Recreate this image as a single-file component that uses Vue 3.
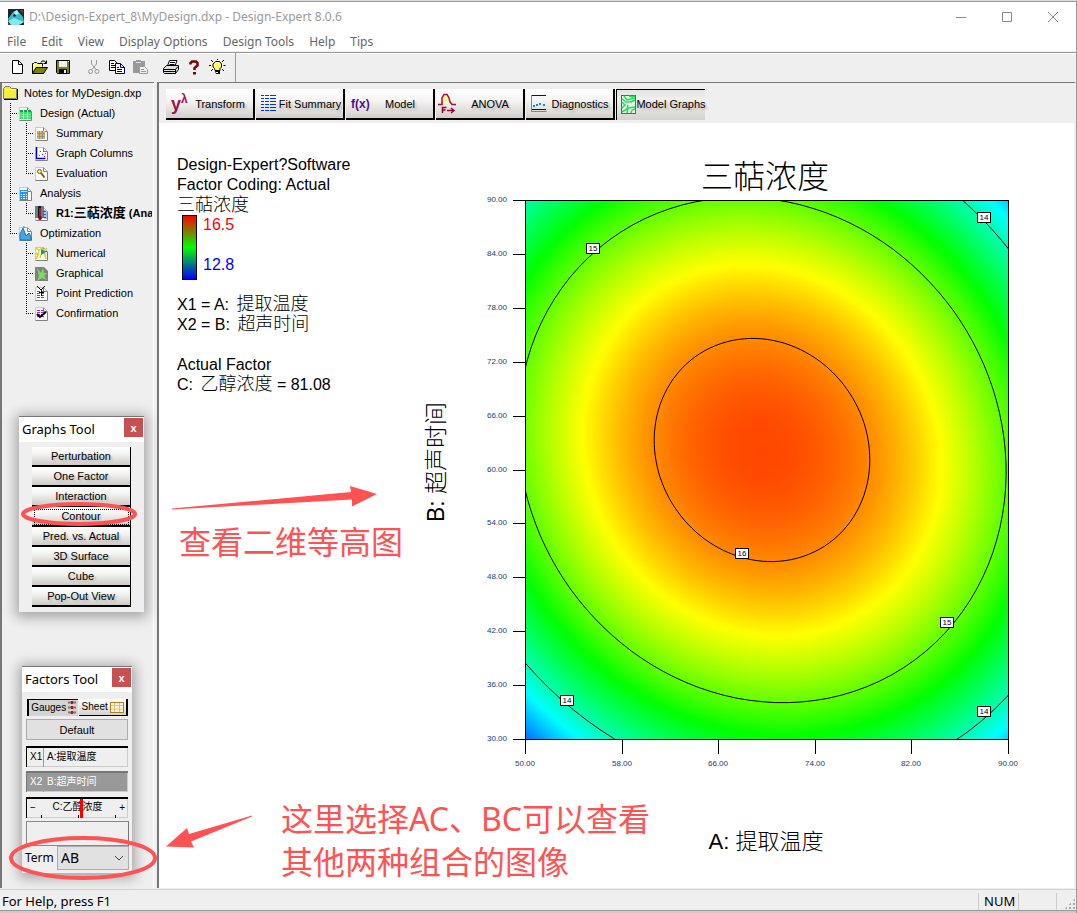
<script setup>
import { ref } from 'vue'

const menus = ['File', 'Edit', 'View', 'Display Options', 'Design Tools', 'Help', 'Tips']

const toolIcons = {
  'New': '<path d="M3.5 1.5h6l4 4v9h-10z" fill="#fff" stroke="#000"/><path d="M9.500 1.500v4h4" fill="none" stroke="#000"/>',
  'Open': '<path d="M.5 14.500v-10h1l1-1h2l1 1h5v3" fill="#ffff80" stroke="#000"/><path d="M.5 14.500l3.500-6h11.500l-4 6z" fill="#808000" stroke="#000"/><path d="M9 3.500l1-1.500h2.500l1.500 2M14.500 1.500v3h-3" fill="none" stroke="#000"/>',
  'Save': '<path d="M1.500 1.500h13v13h-12l-1-1z" fill="#808000" stroke="#000"/><path d="M4 2h8v6H4z" fill="#efefef"/><path d="M4 10h8v4H4z" fill="#000"/><path d="M9 11h2v3H9z" fill="#efefef"/><path d="M13 2h1v1h-1z" fill="#efefef"/>',
  'Cut': '<path d="M5.500 1v4l5 6M10.500 1v4l-5 6" fill="none" stroke="#999"/><circle cx="4.500" cy="12.500" r="2" fill="none" stroke="#999"/><circle cx="11" cy="12.500" r="2" fill="none" stroke="#999"/>',
  'Copy': '<path d="M.5 1.500h5l3 3v7h-8z" fill="#fff" stroke="#000"/><path d="M2 4.500h3M2 6.500h4M2 8.500h4" stroke="#000"/><path d="M6.500 4.500h5l4 4v6h-9z" fill="#fff" stroke="#000080"/><path d="M11.500 4.500v4h4M8 8.500h2M8 10.500h5M8 12.500h5" fill="none" stroke="#000080"/>',
  'Paste': '<path d="M1 2h3V1h5v1h4v5H7v7H1z" fill="#999"/><path d="M4 3.500h5" stroke="#ddd"/><path d="M7.500 7.500h5l3 3v4h-8z" fill="#efefef" stroke="#999"/><path d="M9 10.500h3M9 12.500h5" stroke="#999"/>',
  'Print': '<path d="M4.500 7l2-5.500h7.500l-2 5.500" fill="#fff" stroke="#000"/><path d="M7 3.500h5M6.500 5.500h5" stroke="#000"/><path d="M.5 9.500l3-3h12v4l-3 4h-11l-1-1z" fill="#ddd" stroke="#000"/><path d="M1 10.500h11.500l2.500-3M12.500 10.500v4M1 12.500h11" fill="none" stroke="#000"/><path d="M8 11h3v1H8z" fill="#ffff00"/>',
  'Help': '<path d="M4.500 5.500V4l1.500-1.500h4L11.500 4v2.500L8.500 9v2" fill="none" stroke="#800000" stroke-width="2.500"/><path d="M7 13h3v2.500H7z" fill="#800000"/>',
  'Tips': '<path d="M5.500 9.500L4 8V5l2.500-2.500h4L12.500 5v3L11 9.500v2H6z" fill="#ffff60" stroke="#000"/><path d="M6 12h5v3H7z" fill="#000"/><path d="M7 13.500h2" stroke="#fff"/><path d="M8.500 0v1M2 1l2 2M15 1l-2 2M0 6.500h2M14.500 6.500h2M2 12l2-2M15 12l-2-2" stroke="#000"/>',
}
const toolGroups = [['New', 'Open', 'Save'], ['Cut', 'Copy', 'Paste'], ['Print', 'Help', 'Tips']]

const sheet = '<path d="M1.500 2.500h7l4 4v9h-11z" fill="#fff"/><path d="M.5 15.500v-13h8" fill="none" stroke="#c8c8c8"/><path d="M8.500 2.500v4h4v9h-12" fill="none" stroke="#808080"/><path d="M8.500 2.500l4 4" stroke="#b0b0b0"/>'
const treeIcons = {
  folder: '<path d="M.5 13.500v-10l2-2h4l2 2h5v10z" fill="#f5ec3c" stroke="#808040"/><path d="M14.500 4v10.500H1" fill="none" stroke="#000"/><path d="M2 4.500h11" stroke="#fffbb0"/>',
  design: sheet + '<path d="M1 5h11v9H1z" fill="#30e860"/><path d="M1 5h11v2H1z" fill="#18a040"/><path d="M1 9.500h11M1 11.500h11" stroke="#a0ffb8" stroke-width=".6"/><path d="M4.500 5v9M8.500 5v9" stroke="#fff" stroke-width=".8"/>',
  summary: sheet + '<path d="M2 6h8v8H2z" fill="#e8b048"/><path d="M2 8.500h8M2 11.500h8M4.500 6v8M7.500 6v8" stroke="#8890b0"/>',
  columns: sheet + '<path d="M1.500 2v11.500h9" fill="none" stroke="#0000b0" stroke-width="1.500"/><path d="M5 6h1v1H5zM7 9h1v1H7z" fill="#f00"/><path d="M8 6h1v1H8zM4 10h1v1H4z" fill="#0a0"/><path d="M10 8h1v1h-1zM9 11h1v1H9z" fill="#c0c"/>',
  evaluation: sheet + '<circle cx="4.500" cy="6.500" r="2" fill="#ffe890" stroke="#806000"/><path d="M6 8l3.500 4.500" stroke="#806000" stroke-width="2"/>',
  analysis: sheet + '<path d="M1 5h8v10H1z" fill="#2196f3"/><path d="M2 6h6v1H2z" fill="#c8e8ff"/><path d="M2 9h1v1H2zM4 9h2v1H4zM7 9h1v1H7zM2 11h1v1H2zM4 11h2v1H4zM7 11h1v1H7zM2 13h1v1H2zM4 13h2v1H4zM7 13h1v1H7z" fill="#e8f6ff"/>',
  response: sheet + '<path d="M0 1h9v12H0z" fill="#707888"/><path d="M9 5h3v9H9z" fill="#b8c0e0"/><path d="M4.500 1v12" stroke="#181818" stroke-width="3"/><path d="M5 3v9" stroke="#e04060"/><circle cx="5" cy="13" r="2" fill="#a00020"/><path d="M8 6.500h3M8 9.500h3M8 12.500h3" stroke="#405090"/>',
  optimization: sheet + '<path d="M1 15V9l3-6 2 5 1 3 3-3 2 4v3z" fill="#40a8e8" stroke="#2070b0"/><path d="M4 1l3 1-3 2z" fill="#00d0e0"/>',
  numerical: sheet + '<path d="M0 3l4 2 3-2 2 3 3-3M1 14l2-4 1-5M7 7l-2 6M9 6l2 8M0 8l4 2" fill="none" stroke="#e0d020" stroke-width="1.500"/><path d="M6 4l5 3-5 3z" fill="#1090b0"/>',
  graphical: '<path d="M0 2h9l4 4v10H0z" fill="#808080"/><path d="M2 3l4 5 2-5 1 5 3 0-3 3 3 4-5-2-5 3 2-5z" fill="#78e058"/>',
  point: sheet + '<path d="M2 6.500h8M2 8.500h8M2 10.500h8M2 12.500h8" stroke="#b020d0" stroke-dasharray="3 1"/><path d="M2 1l4 4 4-4M6.500 5v6M4 7.500h5" fill="none" stroke="#000"/>',
  confirm: sheet + '<path d="M2 5.500h8M2 7.500h8M2 9.500h8M2 11.500h8" stroke="#b020d0" stroke-dasharray="3 1"/><path d="M2 9l3 3 6-5" fill="none" stroke="#000" stroke-width="2"/>',
}
/* guides: one entry per indent column; '' blank, 'line' passes through, 'tee' branches, 'end' closes the branch */
const tree = [
  { icon: 'folder', text: 'Notes for MyDesign.dxp', guides: [] },
  { icon: 'design', text: 'Design (Actual)', guides: ['tee'] },
  { icon: 'summary', text: 'Summary', guides: ['line', 'tee'] },
  { icon: 'columns', text: 'Graph Columns', guides: ['line', 'tee'] },
  { icon: 'evaluation', text: 'Evaluation', guides: ['line', 'end'] },
  { icon: 'analysis', text: 'Analysis', guides: ['tee'] },
  { icon: 'response', text: 'R1:', name: '三萜浓度', tail: ' (Ana', guides: ['line', 'end'] },
  { icon: 'optimization', text: 'Optimization', guides: ['end'] },
  { icon: 'numerical', text: 'Numerical', guides: ['', 'tee'] },
  { icon: 'graphical', text: 'Graphical', guides: ['', 'tee'] },
  { icon: 'point', text: 'Point Prediction', guides: ['', 'tee'] },
  { icon: 'confirm', text: 'Confirmation', guides: ['', 'end'] },
]

const tabs = [
  { text: 'Transform', glyph: 'y', sup: 'λ' },
  { text: 'Fit Summary', svg: '<path d="M4 2.500h15M4 5.500h15M4 8.500h15M4 11.500h15M4 14.500h15M4 17.500h15" stroke="#0030ff" stroke-dasharray="3 1 4 1 6 1"/>' },
  { text: 'Model', glyph: 'f(x)', fx: true },
  { text: 'ANOVA', svg: '<path d="M5 11V5l2-3.500h3L12 5v6z" fill="#ffffa0"/><path d="M1 11.500h4V5l2-3.500h3L12 5l1 4 2 2.500h4" fill="none" stroke="#b00840" stroke-width="1.500"/><path d="M5.500 20v-5.500h4M5.500 17h3M10 17.500h6M14 15l3 2.500-3 2.500" fill="none" stroke="#a00030" stroke-width="1.500"/>' },
  { text: 'Diagnostics', svg: '<path d="M5 2.500h14" stroke="#0000c0"/><path d="M4.500 2v16.500h15" fill="none" stroke="#20a8d8"/><path d="M5 16.500h14" stroke="#0000c0"/><path d="M6 12h2v2H6zM9 11h2v2H9zM12 10h2v2h-2zM16 11h2v2h-2z" fill="#0090e0"/>' },
  { text: 'Model Graphs', active: true, svg: '<rect x="4.500" y="1.500" width="14" height="18" fill="#e8fff0" stroke="#606060"/><path d="M5 5l4 3 5 0 4-2M7 2l3 4 8-2M5 8l3 3-3 3M5 18l5-3 1-4M10 19l1-5 7-1M14 19l1-3 3-1M12 2l3 1 3-1" fill="none" stroke="#20e050" stroke-width="1.500"/>' },
]

const graphTools = ['Perturbation', 'One Factor', 'Interaction', 'Contour', 'Pred. vs. Actual', '3D Surface', 'Cube', 'Pop-Out View']
const term = ref('AB')

/* Response surface: z = peak - (a·u² + b·u·v + c·v²), u and v measured from the optimum */
const surface = { peak: 16.2422, cx: 762, cy: 450, a: 2.1e-5, b: -3.5e-6, c: 1.96e-5 }
const plot = { x: 525, y: 200, w: 483, h: 539 }
const scale = { low: 12.8, high: 16.5 }

function colour(z) {
  const stops = [[0, 0, 255], [0, 255, 255], [0, 255, 0], [255, 255, 0], [255, 0, 0]]
  const p = Math.min(3.9999, Math.max(0, ((z - scale.low) / (scale.high - scale.low)) * 4))
  const i = Math.floor(p)
  const mix = stops[i].map((v, n) => Math.round(v + (stops[i + 1][n] - v) * (p - i)))
  return `rgb(${mix.join(',')})`
}
const depth = 3.4
const surfaceStops = Array.from({ length: 86 }, (_, i) => {
  const r = i / 85
  return { offset: r, color: colour(surface.peak - depth * r * r) }
})
const l11 = Math.sqrt(surface.a)
const l21 = surface.b / 2 / l11
const l22 = Math.sqrt(surface.c - l21 * l21)
const k = Math.sqrt(depth)
const surfaceMatrix = `matrix(${k / l11} 0 ${(-k * l21) / (l11 * l22)} ${k / l22} ${surface.cx} ${surface.cy})`

function contour(level) {
  const d = surface.peak - level
  const points = []
  for (let i = 0; i < 120; i++) {
    const t = (i / 120) * Math.PI * 2
    const x = Math.cos(t)
    const y = Math.sin(t)
    const r = Math.sqrt(d / (surface.a * x * x + surface.b * x * y + surface.c * y * y))
    points.push(`${(surface.cx + r * x).toFixed(1)} ${(surface.cy + r * y).toFixed(1)}`)
  }
  return `M${points.join('L')}Z`
}
const contours = [16, 15, 14].map(contour)
const flags = [
  { x: 593, y: 248, v: 15 }, { x: 984, y: 217, v: 14 }, { x: 742, y: 553, v: 16 },
  { x: 947, y: 622, v: 15 }, { x: 567, y: 700, v: 14 }, { x: 984, y: 711, v: 14 },
]
const yTicks = Array.from({ length: 11 }, (_, i) => ({ pos: plot.y + (plot.h * i) / 10, label: (90 - 6 * i).toFixed(2) }))
const xTicks = Array.from({ length: 6 }, (_, i) => ({ pos: plot.x + (plot.w * i) / 5, label: (50 + 8 * i).toFixed(2) }))
</script>

<template>
  <div class="app">
    <header class="titlebar">
      <svg class="logo" width="16" height="16" viewBox="0 0 16 16" aria-hidden="true">
        <rect width="16" height="16" fill="#182430" />
        <path d="M0 10l5-7 4-2 6 7 1 5-6 3H3z" fill="#38b8c8" />
        <path d="M0 12l6-3 10 4-5 3H3z" fill="#80e8f0" />
        <path d="M6 3l3-2 2 4-4 1z" fill="#a8f4f8" />
        <path d="M6 5l2 1-1 2-2-1z" fill="#102028" />
        <path d="M12 1h3v4z" fill="#803828" />
        <path d="M0 13l3 3H0z" fill="#604830" />
      </svg>
      <h1>D:\Design-Expert_8\MyDesign.dxp - Design-Expert 8.0.6</h1>
      <div class="winctl">
        <button aria-label="Minimize"><svg width="12" height="12" viewBox="0 0 12 12"><path d="M1 6.500h10" stroke="#888" /></svg></button>
        <button aria-label="Maximize"><svg width="12" height="12" viewBox="0 0 12 12"><path d="M1.500 1.500h9v9h-9z" fill="none" stroke="#888" /></svg></button>
        <button aria-label="Close"><svg width="12" height="12" viewBox="0 0 12 12"><path d="M1 1l10 10M11 1L1 11" stroke="#888" /></svg></button>
      </div>
    </header>
    <nav class="menubar"><button v-for="m in menus" :key="m">{{ m }}</button></nav>
    <div class="toolbar">
      <div class="tools">
        <div v-for="(g, i) in toolGroups" :key="i" class="group">
          <button v-for="t in g" :key="t" :aria-label="t">
            <svg width="17" height="17" viewBox="0 0 17 17" v-html="toolIcons[t]"></svg>
          </button>
        </div>
      </div>
    </div>

    <div class="body">
      <aside class="side">
        <ul class="tree">
          <li v-for="n in tree" :key="n.text" :class="{ bold: n.name }">
            <span v-for="(g, i) in n.guides" :key="i" class="guide" :class="g"></span>
            <svg width="16" height="17" viewBox="0 0 16 17" v-html="treeIcons[n.icon]"></svg>
            <span class="label">{{ n.text }}<span v-if="n.name" class="name">{{ n.name }}</span>{{ n.tail }}</span>
          </li>
        </ul>
      </aside>

      <main class="main">
        <div class="tabs">
          <button v-for="t in tabs" :key="t.text" :class="{ active: t.active }">
            <svg v-if="t.svg" width="20" height="21" viewBox="0 0 20 21" v-html="t.svg"></svg>
            <span v-else class="glyph" :class="{ fx: t.fx }">{{ t.glyph }}<sup v-if="t.sup">{{ t.sup }}</sup></span>
            <span class="cap">{{ t.text }}</span>
          </button>
        </div>
        <div class="canvas">
          <section class="legend">
            <p>Design-Expert?Software</p>
            <p>Factor Coding: Actual</p>
            <p class="cjk">三萜浓度</p>
            <div class="scale">
              <span class="ramp"></span>
              <span class="range"><span class="hi">16.5</span><span class="lo">12.8</span></span>
            </div>
            <p>X1 = A: <span class="cjk">提取温度</span></p>
            <p>X2 = B: <span class="cjk">超声时间</span></p>
            <p class="spaced">Actual Factor</p>
            <p>C: <span class="cjk">乙醇浓度</span> = 81.08</p>
          </section>
          <svg class="chart" viewBox="420 123 654 765" preserveAspectRatio="xMidYMin meet">
            <defs>
              <radialGradient id="surface" gradientUnits="userSpaceOnUse" cx="0" cy="0" r="1" :gradientTransform="surfaceMatrix">
                <stop v-for="s in surfaceStops" :key="s.offset" :offset="s.offset" :stop-color="s.color" />
              </radialGradient>
              <clipPath id="frame"><rect :x="plot.x" :y="plot.y" :width="plot.w" :height="plot.h" /></clipPath>
            </defs>
            <text class="thin" x="765" y="188" font-size="32" text-anchor="middle">三萜浓度</text>
            <rect :x="plot.x" :y="plot.y" :width="plot.w" :height="plot.h" fill="url(#surface)" />
            <g clip-path="url(#frame)" fill="none" stroke="#000"><path v-for="(d, i) in contours" :key="i" :d="d" /></g>
            <g shape-rendering="crispEdges" stroke="#000" fill="none">
              <rect :x="plot.x + 0.5" :y="plot.y + 0.5" :width="plot.w" :height="plot.h" />
              <path v-for="t in yTicks" :key="t.label" :d="`M513 ${Math.round(t.pos) + 0.5}H525`" />
              <path v-for="t in xTicks" :key="t.label" :d="`M${Math.round(t.pos) + 0.5} 739V754`" />
              <rect v-for="(f, i) in flags" :key="i" :x="f.x - 7 + 0.5" :y="f.y - 5 + 0.5" width="13" height="10" fill="#fff" />
            </g>
            <g class="ticks" font-size="8">
              <text v-for="t in yTicks" :key="t.label" x="507" :y="Math.round(t.pos) + 2" text-anchor="end">{{ t.label }}</text>
              <text v-for="t in xTicks" :key="t.label" :x="Math.round(t.pos)" y="766" text-anchor="middle">{{ t.label }}</text>
            </g>
            <g class="flags" font-size="8">
              <text v-for="(f, i) in flags" :key="i" :x="f.x" :y="f.y + 3" text-anchor="middle">{{ f.v }}</text>
            </g>
            <text class="thin" transform="translate(444 522) rotate(-90)" font-size="23">B: 超声时间</text>
            <text class="thin" x="766" y="849" font-size="22" text-anchor="middle">A: 提取温度</text>
          </svg>
        </div>
      </main>
    </div>

    <footer class="status">
      <span class="hint">For Help, press F1</span><span class="cell num">NUM</span><span class="cell"></span><span class="grip"></span>
    </footer>
    <div class="edge"></div>

    <section class="float graphs">
      <header><h2>Graphs Tool</h2><button class="x" aria-label="Close Graphs Tool">x</button></header>
      <div class="stack">
        <button v-for="g in graphTools" :key="g" :class="{ focus: g === 'Contour' }">{{ g }}</button>
      </div>
    </section>

    <section class="float factors">
      <header><h2>Factors Tool</h2><button class="x" aria-label="Close Factors Tool">x</button></header>
      <div class="inner">
        <div class="views">
          <button class="on">Gauges<svg width="8" height="14" viewBox="0 0 8 14"><path d="M0 1.500h8M0 6.500h8M0 11.500h8" stroke="#777" stroke-width="2" /><path d="M4 0v3M4 5v3M4 10v3" stroke="#e00000" stroke-width="2" /></svg></button>
          <button>Sheet<svg width="14" height="11" viewBox="0 0 14 11"><rect x=".5" y=".5" width="13" height="10" fill="#fff8e0" stroke="#b08020" /><path d="M1 3.500h12M1 7h12M4.500 1v9M9.500 1v9" stroke="#e0c080" /></svg></button>
        </div>
        <button class="default">Default</button>
        <div class="gauge"><b>X1</b><span>A:提取温度</span></div>
        <div class="gauge dark"><b>X2</b><span>B:超声时间</span></div>
        <div class="gauge slide">
          <i>−</i><span>C:乙醇浓度</span><i>+</i>
          <svg class="marks" width="100" height="20" viewBox="0 0 100 20" aria-hidden="true"><path d="M14.500 16v3M51.500 16v3M88.500 16v3" stroke="#000" /><path d="M54.500 0v19" stroke="#f00" stroke-width="3" /></svg>
        </div>
        <div class="blank"></div>
        <div class="term">
          <label for="term">Term</label>
          <span class="pick">
            <select id="term" v-model="term"><option>AB</option><option>AC</option><option>BC</option></select>
            <svg width="10" height="6" viewBox="0 0 10 6" aria-hidden="true"><path d="M1 1l4 4 4-4" fill="none" stroke="#444" /></svg>
          </span>
        </div>
      </div>
    </section>

    <svg class="notes" width="700" height="900" viewBox="0 0 700 900">
      <g fill="none" stroke="#ff5252">
        <ellipse cx="79" cy="514" rx="56" ry="10" stroke-width="4" />
        <ellipse cx="83" cy="858" rx="72" ry="20" stroke-width="4" />
      </g>
      <g fill="#ff5252">
        <path d="M172 508.500L351 492L350 486L377 494L352 506.500L352 499.500L172 509.500Z" />
        <path d="M252 815.500L189 834L187 828L166 846.500L194 847.500L191 841.500L252 816.500Z" />
        <text x="179" y="554">查看二维等高图</text>
        <text x="281" y="831">这里选择AC、BC可以查看</text>
        <text x="281" y="874">其他两种组合的图像</text>
      </g>
    </svg>
  </div>
</template>

<style>
body { margin: 0; background: #fff; }
</style>

<style scoped>
* { box-sizing: border-box; }
button, select { font: inherit; color: inherit; border: 0; margin: 0; padding: 0; background: none; }
p, h1, h2, ul { margin: 0; padding: 0; font-weight: 400; }
.app {
  position: relative; display: flex; flex-direction: column; min-height: 100vh;
  border-top: 1px solid #ddd; border-right: 1px solid #999; background: #efefef; overflow: hidden;
  font: 12px/16px "Noto Sans", "Noto Sans CJK SC", sans-serif; color: #000;
}
.titlebar { display: flex; align-items: center; height: 31px; padding-left: 8px; background: #fff; border-top: 1px solid #999; }
.titlebar h1 { flex: 1; margin-left: 5px; font-size: 12px; color: #999; white-space: nowrap; }
.winctl { display: flex; }
.winctl button { width: 46px; height: 28px; display: flex; align-items: center; justify-content: center; }
.menubar { display: flex; align-items: center; gap: 15px; height: 20px; padding-left: 7px; background: #fff; color: #666; border-bottom: 1px solid #efefef; }
.toolbar { height: 30px; border-top: 1px solid #999; box-shadow: inset 0 1px #fff; display: flex; }
.tools { display: flex; align-items: center; gap: 8px; width: 236px; padding-left: 6px; border-right: 1px solid #999; }
.group { display: flex; }
.group button { width: 23px; height: 21px; display: flex; align-items: center; justify-content: center; }
.group svg { display: block; }

.body { flex: 1; display: flex; min-height: 0; }
.side { flex: none; width: 154px; border: solid #777; border-width: 1px 0 0 2px; box-shadow: inset -1px 0 #fff; overflow: hidden; }
.tree { list-style: none; font: 11px/20px "Liberation Sans", "Noto Sans CJK SC", sans-serif; width: 150px; overflow: hidden; }
.tree li { display: flex; align-items: center; height: 20px; padding-left: 1px; white-space: nowrap; }
.tree svg { flex: none; }
.label { margin-left: 5px; }
.bold { font-weight: 700; }
.name { font-size: 13px; line-height: 16px; }
.guide { position: relative; flex: none; width: 16px; height: 20px; }
.guide.line::before, .guide.tee::before, .guide.end::before {
  content: ""; position: absolute; left: 7px; top: 0; bottom: 0; width: 1px;
  background: repeating-linear-gradient(#000 0 1px, transparent 1px 2px);
}
.guide.end::before { bottom: 9px; }
.guide.tee::after, .guide.end::after {
  content: ""; position: absolute; left: 7px; right: 2px; top: 10px; height: 1px;
  background: repeating-linear-gradient(90deg, #000 0 1px, transparent 1px 2px);
}

.main { flex: 1; min-width: 0; display: flex; flex-direction: column; margin-left: 3px; border: solid #777; border-width: 1px 0 0 2px; border-right: 2px solid #efefef; background: #fff; }
.tabs { display: flex; height: 40px; padding: 6px 0 0 7px; background: #efefef; font: 11px/16px "Liberation Sans", sans-serif; }
.tabs button {
  display: flex; align-items: center; width: 89px; height: 31px; margin-right: 1px; padding-left: 1px;
  background: linear-gradient(#fff, #f4f4f2 40%, #d0cec8); border: solid #000; border-width: 0 2px 2px 0;
}
.tabs button.active { padding-left: 0; padding-bottom: 2px; border-width: 1px 0 0 1px; background: linear-gradient(#e4e3e0, #efefed 30%, #d4d2cc); }
.tabs svg, .glyph { flex: none; width: 20px; }
.glyph { margin-left: 4px; margin-right: -4px; font: 700 18px/20px "Liberation Sans", sans-serif; color: #a01050; white-space: nowrap; text-align: left; }
.glyph sup { font-size: 12px; line-height: 8px; }
.glyph.fx { font-size: 12px; color: #4a1090; }
.cap { flex: 1; min-width: 0; display: flex; justify-content: center; white-space: nowrap; text-shadow: 2px 2px 2px #bbb; }

.canvas { flex: 1; display: flex; align-items: flex-start; }
.legend { flex: none; width: 261px; padding: 32px 0 0 18px; font: 16px/20px "Liberation Sans", sans-serif; white-space: nowrap; }
.legend p { height: 20px; }
.legend .spaced { margin-top: 20px; }
.cjk { font-family: "Noto Sans CJK SC", sans-serif; font-size: 18px; font-weight: 300; }
p.cjk { line-height: 16px; }
span.cjk { line-height: 1px; margin-left: 3px; }
.scale { display: flex; height: 80px; padding-left: 5px; }
.ramp { width: 15px; height: 65px; border: 1px solid #000; background: linear-gradient(#f00, #0f0, #00f); }
.range { display: flex; flex-direction: column; justify-content: space-between; height: 60px; margin-left: 6px; }
.hi { color: #f00; }
.lo { color: #00f; }
.chart { flex: 1; min-width: 0; display: block; }
.chart text { font-family: "Liberation Sans", "Noto Sans CJK SC", sans-serif; }
.chart .thin { font-weight: 300; }
.ticks text { fill: #10407a; }

.status { display: flex; align-items: center; height: 21px; padding: 2px 0 0 2px; margin-top: 1px; border-top: 1px solid #d0d0d0; font-size: 13px; }
.hint { flex: 1; }
.cell { width: 38px; height: 17px; border-left: 1px solid #ccc; }
.num { width: 40px; padding-left: 5px; }
.grip { width: 20px; height: 17px; border-left: 1px solid #ccc; background: radial-gradient(circle, #aaa 1px, transparent 1px) right bottom / 4px 4px; clip-path: polygon(0 0, 1px 0, 1px 17px, 8px 17px, 20px 5px, 20px 17px, 0 17px); }
.edge { height: 3px; border-top: 1px solid #999; background: #ccc; }

.float { position: absolute; background: #efefef; border-top: 1px solid #777; box-shadow: 0 2px 12px 3px rgba(0, 0, 0, .32); }
.float header { display: flex; justify-content: space-between; height: 25px; padding: 1px 1px 0 3px; background: #fff; }
.float h2 { font-size: 13px; line-height: 22px; }
.x { width: 19px; height: 19px; background: #c75050; color: #fff; font: 700 11px/16px "Liberation Sans", sans-serif; }
.graphs { left: 19px; top: 415px; width: 125px; height: 196px; }
.stack { padding: 5px 13px 0 13px; font: 11px/16px "Liberation Sans", sans-serif; }
.stack button { display: block; width: 100%; height: 20px; background: linear-gradient(#fff, #f2f2f0 40%, #cfccc5); border: solid #000; border-width: 0 1px 2px 0; text-shadow: 2px 2px 2px #bbb; }
.stack .focus { outline: 1px dotted #000; outline-offset: -3px; }
.factors { left: 22px; top: 665px; width: 110px; height: 207px; }
.inner { padding: 7px 3px 0 4px; font: 11px/16px "Liberation Sans", "Noto Sans CJK SC", sans-serif; }
.views { display: flex; gap: 1px; height: 17px; font-size: 10px; margin: 0 1px; }
.views button { flex: 1 0 auto; display: flex; align-items: center; justify-content: space-evenly; background: linear-gradient(#fff, #d4d2cc); border: solid #000; border-width: 0 2px 1px 0; }
.views .on { border-width: 1px 0 0 2px; background: #d6d4d0; }
.default { display: block; width: 102px; height: 21px; margin-top: 3px; background: #e1e1e1; border: 1px solid #adadad; }
.gauge { position: relative; display: flex; width: 102px; height: 21px; margin-top: 4px; border: solid #000; border-width: 2px 0 0 1px; box-shadow: inset -1px -1px #ccc; font-size: 10px; line-height: 17px; }
.default + .gauge { margin-top: 6px; }
.gauge b { width: 17px; padding-left: 3px; font-weight: 400; border-right: 1px solid #999; }
.gauge span { padding-left: 3px; }
.dark { background: #999; color: #fff; border-color: #777; }
.slide { justify-content: space-between; margin-top: 5px; padding: 0 3px; line-height: 15px; }
.slide i { font-style: normal; line-height: 18px; }
.slide span { padding-left: 0; }
.marks { position: absolute; left: 0; top: 0; }
.blank { width: 103px; height: 25px; margin-top: 3px; border: 1px solid #888; border-right-color: #777; }
.term { display: flex; align-items: center; justify-content: space-between; height: 24px; font: 12px/16px "Noto Sans", sans-serif; margin-left: -1px; }
.pick { position: relative; width: 72px; height: 24px; background: #e1e1e1; border: 1px solid #adadad; }
.pick select { appearance: none; width: 100%; height: 100%; padding-left: 3px; font-size: 14px; }
.pick svg { position: absolute; right: 4px; top: 8px; pointer-events: none; }

.notes { position: absolute; left: 0; top: -1px; pointer-events: none; }
.notes text { font: 32px "Noto Sans", "Noto Sans CJK SC", sans-serif; }
</style>
